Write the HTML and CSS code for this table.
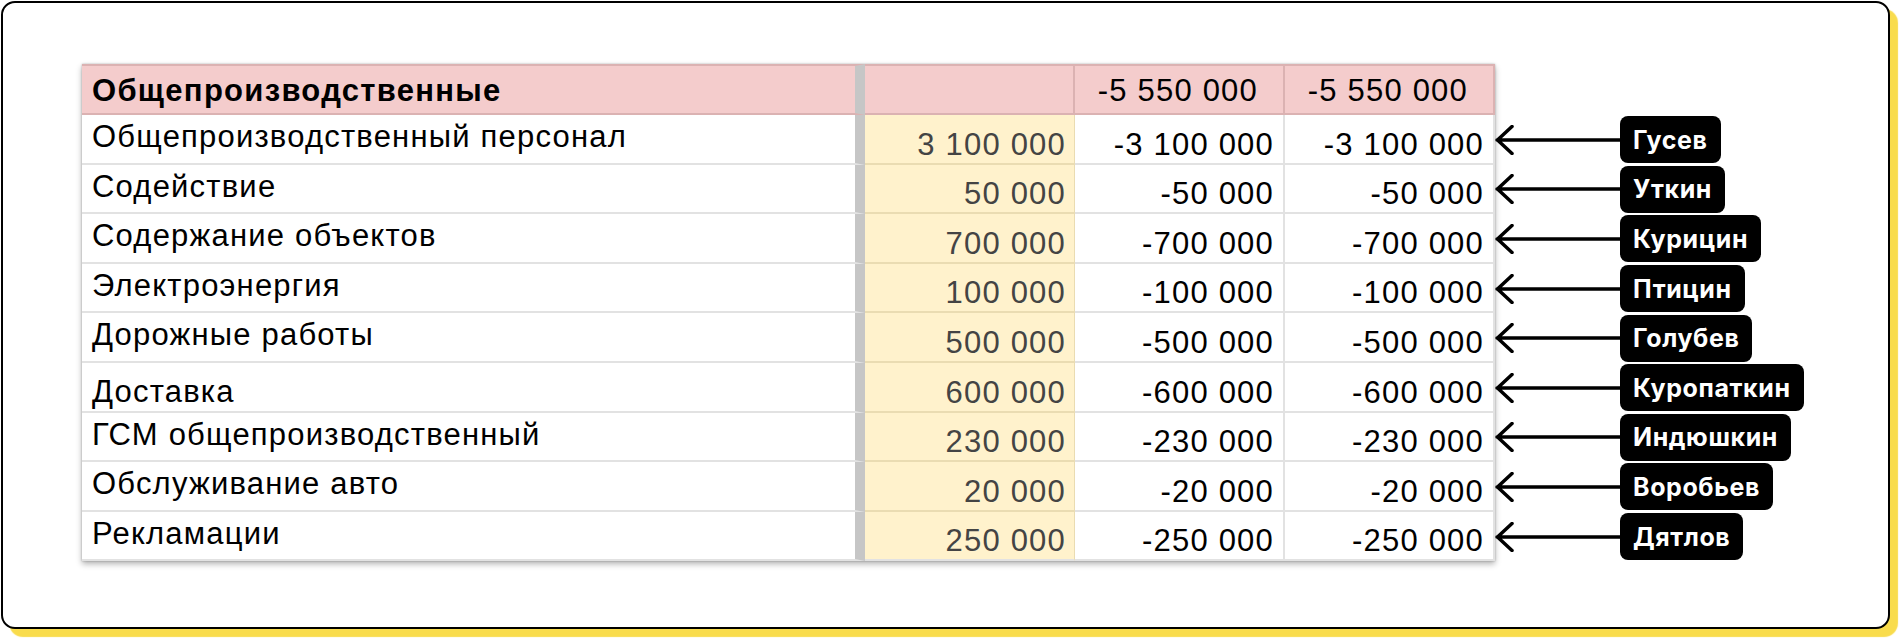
FILE: index.html
```html
<!DOCTYPE html>
<html lang="ru">
<head>
<meta charset="utf-8">
<title>Общепроизводственные</title>
<link rel="stylesheet" href="styles.css">
</head>
<body>
<div class="page">
<div class="card">
  <div class="content">
    <table class="sheet">
      <colgroup>
        <col class="c-name"><col class="c-plan"><col class="c-a"><col class="c-b">
      </colgroup>
      <thead>
        <tr class="head">
          <th class="name">Общепроизводственные</th>
          <th class="plan"></th>
          <th class="num">-5 550 000</th>
          <th class="num">-5 550 000</th>
        </tr>
      </thead>
      <tbody>
        <tr><td class="name">Общепроизводственный персонал</td><td class="plan">3 100 000</td><td class="num">-3 100 000</td><td class="num">-3 100 000</td></tr>
        <tr><td class="name">Содействие</td><td class="plan">50 000</td><td class="num">-50 000</td><td class="num">-50 000</td></tr>
        <tr><td class="name">Содержание объектов</td><td class="plan">700 000</td><td class="num">-700 000</td><td class="num">-700 000</td></tr>
        <tr><td class="name">Электроэнергия</td><td class="plan">100 000</td><td class="num">-100 000</td><td class="num">-100 000</td></tr>
        <tr><td class="name">Дорожные работы</td><td class="plan">500 000</td><td class="num">-500 000</td><td class="num">-500 000</td></tr>
        <tr><td class="name low">Доставка</td><td class="plan">600 000</td><td class="num">-600 000</td><td class="num">-600 000</td></tr>
        <tr><td class="name">ГСМ общепроизводственный</td><td class="plan">230 000</td><td class="num">-230 000</td><td class="num">-230 000</td></tr>
        <tr><td class="name">Обслуживание авто</td><td class="plan">20 000</td><td class="num">-20 000</td><td class="num">-20 000</td></tr>
        <tr><td class="name">Рекламации</td><td class="plan">250 000</td><td class="num">-250 000</td><td class="num">-250 000</td></tr>
      </tbody>
    </table>
    <div class="notes">
      <div class="note"><svg class="arrow" viewBox="0 0 125 30" width="125" height="30"><path d="M2 15H125M17 1.5L2.5 15L17 28.5"/></svg><span class="tag">Гусев</span></div>
      <div class="note"><svg class="arrow" viewBox="0 0 125 30" width="125" height="30"><path d="M2 15H125M17 1.5L2.5 15L17 28.5"/></svg><span class="tag">Уткин</span></div>
      <div class="note"><svg class="arrow" viewBox="0 0 125 30" width="125" height="30"><path d="M2 15H125M17 1.5L2.5 15L17 28.5"/></svg><span class="tag">Курицин</span></div>
      <div class="note"><svg class="arrow" viewBox="0 0 125 30" width="125" height="30"><path d="M2 15H125M17 1.5L2.5 15L17 28.5"/></svg><span class="tag">Птицин</span></div>
      <div class="note"><svg class="arrow" viewBox="0 0 125 30" width="125" height="30"><path d="M2 15H125M17 1.5L2.5 15L17 28.5"/></svg><span class="tag">Голубев</span></div>
      <div class="note"><svg class="arrow" viewBox="0 0 125 30" width="125" height="30"><path d="M2 15H125M17 1.5L2.5 15L17 28.5"/></svg><span class="tag">Куропаткин</span></div>
      <div class="note"><svg class="arrow" viewBox="0 0 125 30" width="125" height="30"><path d="M2 15H125M17 1.5L2.5 15L17 28.5"/></svg><span class="tag">Индюшкин</span></div>
      <div class="note"><svg class="arrow" viewBox="0 0 125 30" width="125" height="30"><path d="M2 15H125M17 1.5L2.5 15L17 28.5"/></svg><span class="tag">Воробьев</span></div>
      <div class="note"><svg class="arrow" viewBox="0 0 125 30" width="125" height="30"><path d="M2 15H125M17 1.5L2.5 15L17 28.5"/></svg><span class="tag">Дятлов</span></div>
    </div>
  </div>
</div>
</div>
</body>
</html>
```
FILE: styles.css
```css
html, body {
  margin: 0;
  padding: 0;
  background: #ffffff;
}

.page {
  box-sizing: border-box;
  width: 1901px;
  height: 639px;
  padding: 1px 0 0 1px;
}

.card {
  box-sizing: border-box;
  width: 1889px;
  height: 628px;
  border: 2px solid #000;
  border-radius: 14px;
  background: #fff;
  box-shadow: 8px 8px 1px #f9dc4c;
  padding: 61px 0 0 79px;
}

.content {
  display: flex;
  align-items: flex-start;
}

.sheet {
  width: 1413px;
  table-layout: fixed;
  border-collapse: separate;
  border-spacing: 0;
  font-family: "Liberation Sans", Arial, sans-serif;
  font-size: 31px;
  letter-spacing: 1.2px;
  color: #000;
  background: #fff;
  box-shadow: 0 3px 6px rgba(0, 0, 0, 0.3), 0 0 2px rgba(0, 0, 0, 0.25);
}

.c-name { width: 783px; }
.c-plan { width: 210px; }
.c-a { width: 210px; }
.c-b { width: 210px; }

.sheet th,
.sheet td {
  box-sizing: border-box;
  padding: 0 10px;
  line-height: 36px;
  white-space: nowrap;
  overflow: hidden;
  font-weight: normal;
}

.head th {
  height: 51px;
  background: #f4cccc;
  border-top: 2px solid #dbb2b2;
  border-bottom: 2px solid #dbb2b2;
  border-right: 2px solid #dbb2b2;
  vertical-align: top;
  padding-top: 7px;
}

.head th.name {
  font-weight: bold;
  text-align: left;
  letter-spacing: 1.3px;
  border-right: 10px solid #c6c6c6;
}

.head th.num {
  text-align: right;
  padding-right: 25px;
}

.sheet td {
  height: 49.6px;
  border-bottom: 2px solid #e2e2e2;
  border-right: 2px solid #e2e2e2;
}

.sheet td.name {
  text-align: left;
  vertical-align: top;
  padding-top: 4px;
  border-right: 10px solid #c6c6c6;
}

.sheet td.name.low {
  padding-top: 11px;
}

.sheet td.plan {
  background: #fff2cc;
  color: #444;
  text-align: right;
  vertical-align: bottom;
  padding-right: 8px;
  border-bottom-color: #eadcb2;
  border-right: 1px solid #eadcb2;
}

.sheet td.num {
  text-align: right;
  vertical-align: bottom;
  padding-right: 9px;
}

.sheet tr:last-child td {
  border-bottom-color: #e2e2e2;
}

.notes {
  display: flex;
  flex-direction: column;
  padding-top: 51px;
}

.note {
  height: 49.6px;
  display: flex;
  align-items: center;
}

.arrow {
  display: block;
  fill: none;
  stroke: #000;
  stroke-width: 3.5;
  stroke-linecap: round;
  stroke-linejoin: round;
}

.tag {
  box-sizing: border-box;
  height: 47px;
  display: flex;
  align-items: center;
  padding: 0 13px;
  background: #000;
  color: #fff;
  border-radius: 8px;
  font-family: Inter, "Noto Sans", sans-serif;
  font-weight: 700;
  font-size: 25px;
  letter-spacing: 0.6px;
}
```
